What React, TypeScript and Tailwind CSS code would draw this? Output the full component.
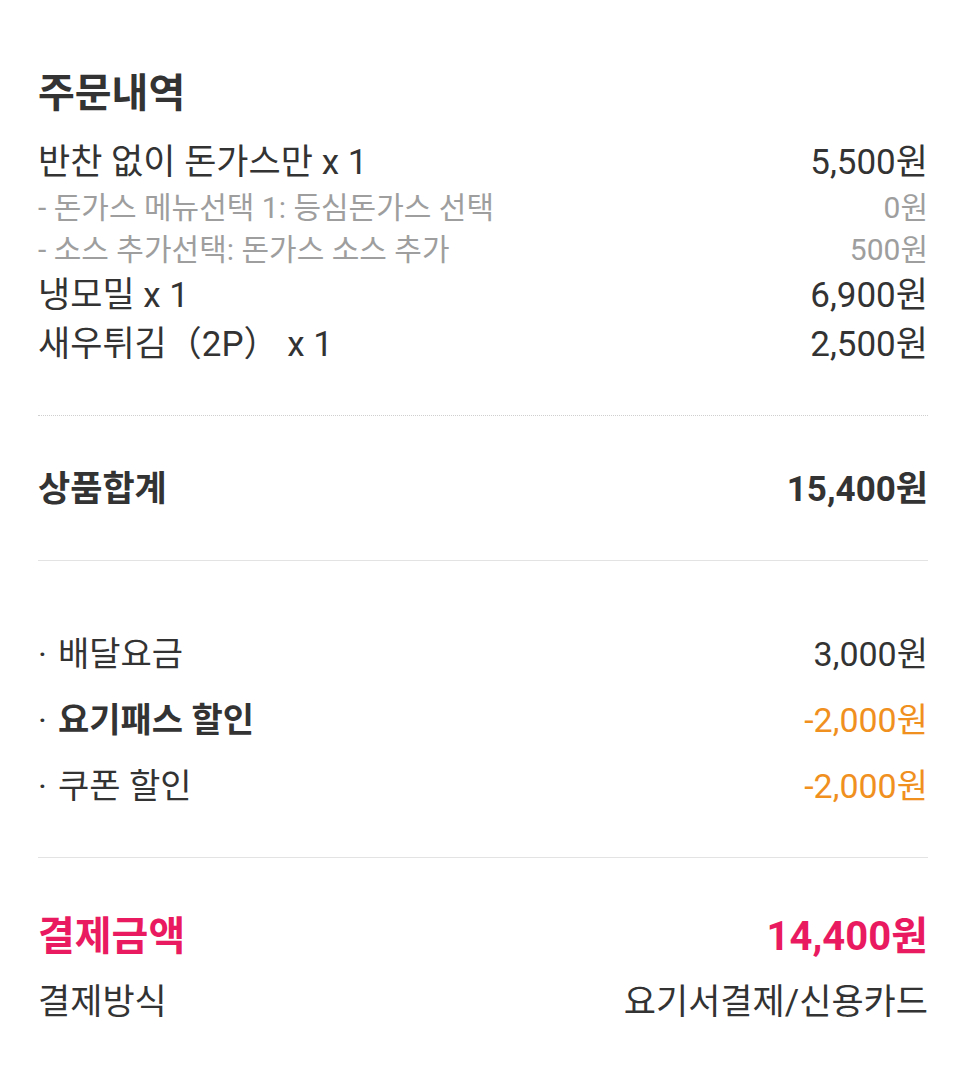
import React from 'react';

interface Line {
  label: string;
  price: string;
  sub?: boolean;
}

const items: Line[] = [
  { label: '반찬 없이 돈가스만 x 1', price: '5,500원' },
  { label: '- 돈가스 메뉴선택 1: 등심돈가스 선택', price: '0원', sub: true },
  { label: '- 소스 추가선택: 돈가스 소스 추가', price: '500원', sub: true },
  { label: '냉모밀 x 1', price: '6,900원' },
  { label: '새우튀김（2P） x 1', price: '2,500원' },
];

const fees = [
  { label: '배달요금', price: '3,000원', bold: false, discount: false },
  { label: '요기패스 할인', price: '-2,000원', bold: true, discount: true },
  { label: '쿠폰 할인', price: '-2,000원', bold: false, discount: true },
];

export default function App() {
  return (
    <div className="min-h-screen bg-white font-['Roboto','Noto_Sans_CJK_KR',sans-serif] text-[#333]">
      <div className="px-[38px] pt-[70px] pb-[34px]">
        <h1 className="text-[40px] font-bold leading-[48px]">주문내역</h1>

        <div className="mt-[20px]">
          {items.map((it, i) => (
            <div
              key={i}
              className={
                it.sub
                  ? 'flex justify-between items-center text-[30px] leading-[42px] text-[#9e9e9e]'
                  : 'flex justify-between items-center text-[35px] leading-[49px]'
              }
            >
              <span className="whitespace-pre">{it.label}</span>
              <span>{it.price}</span>
            </div>
          ))}
        </div>

        <div className="mt-[46px] border-t border-dotted border-[#cfcfcf]" />

        <div className="flex justify-between items-center h-[44px] mt-[52px] text-[35px] font-bold">
          <span>상품합계</span>
          <span>15,400원</span>
        </div>

        <div className="mt-[48px] border-t border-[#e3e3e3]" />

        <div className="mt-[60px]">
          {fees.map((f) => (
            <div key={f.label} className="flex justify-between items-center h-[66px] text-[34px]">
              <span className="flex items-center">
                <span className="w-[20px] text-[#333] font-normal">·</span>
                <span className={f.bold ? 'font-bold' : ''}>{f.label}</span>
              </span>
              <span className={f.discount ? 'text-[#f0901e]' : ''}>{f.price}</span>
            </div>
          ))}
        </div>

        <div className="mt-[38px] border-t border-[#e3e3e3]" />

        <div className="mt-[45px]">
          <div className="flex justify-between items-center h-[67px] text-[40px] font-bold text-[#ea1a60]">
            <span>결제금액</span>
            <span>14,400원</span>
          </div>
          <div className="flex justify-between items-center h-[67px] text-[35px]">
            <span>결제방식</span>
            <span>요기서결제/신용카드</span>
          </div>
        </div>
      </div>
    </div>
  );
}
